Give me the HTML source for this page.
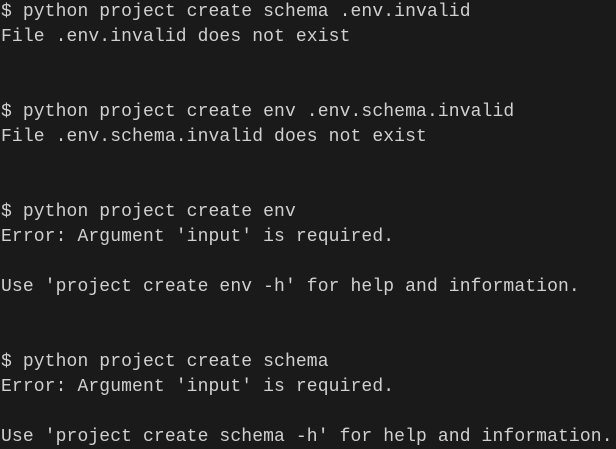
<!DOCTYPE html>
<html><head><style>
html,body{margin:0;padding:0;background:#1a1a1a;width:616px;height:449px;overflow:hidden}
pre{margin:0;padding:0 0 0 1px;font-family:"Liberation Mono",monospace;font-size:18px;letter-spacing:0.12px;line-height:25px;color:#d0d0d0;white-space:pre}
</style></head><body><pre>$ python project create schema .env.invalid
File .env.invalid does not exist


$ python project create env .env.schema.invalid
File .env.schema.invalid does not exist


$ python project create env
Error: Argument 'input' is required.

Use 'project create env -h' for help and information.


$ python project create schema
Error: Argument 'input' is required.

Use 'project create schema -h' for help and information.</pre></body></html>
